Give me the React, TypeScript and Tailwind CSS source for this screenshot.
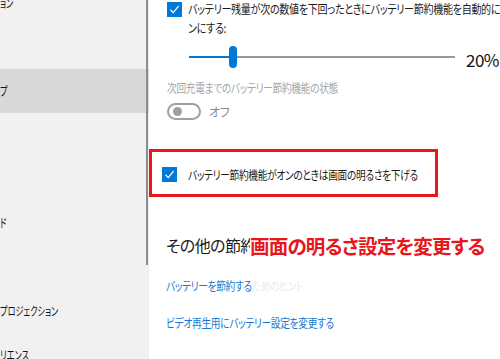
import React from 'react';

const jp = "font-['Noto_Sans_CJK_JP','Noto_Sans',sans-serif] [font-feature-settings:'palt']";
const narrow = 'origin-left scale-x-[0.81]';

const Check = ({ className = '' }: { className?: string }) => (
  <div className={`flex h-[15px] w-[15px] shrink-0 items-center justify-center bg-[#0078d7] ${className}`}>
    <svg width="11" height="11" viewBox="0 0 11 11" fill="none">
      <path d="M1.5 5.8 L4.2 8.6 L9.6 2.2" stroke="#fff" strokeWidth="1.3" />
    </svg>
  </div>
);

const navRows = ['ョン', '', 'プ', '', '', 'ド', '', 'プロジェクション', 'リエンス'];

const Sidebar = () => (
  <div className="relative h-full w-[149px] shrink-0 overflow-hidden bg-[#f1f1f2]">
    <div className="-mt-[19px] flex flex-col">
      {navRows.map((t, i) => (
        <div
          key={i}
          className={`flex h-[44px] items-center text-[12px] text-[#111] ${i === 2 ? 'bg-[#d9d9d9]' : ''}`}
        >
          <span className="origin-left scale-x-[0.68] whitespace-nowrap">{t}</span>
        </div>
      ))}
    </div>
    <div className="absolute left-[146px] top-0 h-[265px] w-[2px] bg-[#8c8c8c]" />
  </div>
);

export default function App() {
  return (
    <div className={`flex h-[359px] w-[500px] overflow-hidden bg-white ${jp}`}>
      <Sidebar />
      <div className="flex min-w-0 flex-1 flex-col">
        <div className="flex pl-[18px] pt-[2px]">
          <Check />
          <div className="ml-[6px] -mt-[3px] whitespace-nowrap text-[12px] leading-[19px] tracking-[-0.4px] text-[#1a1a1a] origin-left scale-x-[0.84]">
            <div>バッテリー残量が次の数値を下回ったときにバッテリー節約機能を自動的にオ</div>
            <div>ンにする:</div>
          </div>
        </div>

        <div className="ml-[40px] mt-[4px] flex items-center">
          <div className="relative flex h-[22px] w-[266px] items-center">
            <div className="h-[2px] w-[44px] bg-[#0078d7]" />
            <div className="h-[2px] flex-1 bg-[#999]" />
            <div className="absolute left-[40px] top-0 h-[22px] w-[8px] rounded-full bg-[#0078d7]" />
          </div>
          <div className="ml-[11px] whitespace-nowrap pt-[6px] text-[17px] tracking-[-0.5px] text-[#111]">20%</div>
        </div>

        <div className={`ml-[18px] mt-[6px] whitespace-nowrap text-[12px] tracking-[-0.4px] text-[#a6a6a6] ${narrow}`}>
          次回充電までのバッテリー節約機能の状態
        </div>

        <div className="ml-[18px] mt-[6px] flex items-center">
          <div className="flex h-[17px] w-[34px] items-center rounded-full border-2 border-[#a0a0a0] pl-[4px]">
            <div className="h-[9px] w-[9px] rounded-full bg-[#a0a0a0]" />
          </div>
          <div className="ml-[8px] text-[12px] tracking-[-0.5px] text-[#888]">オフ</div>
        </div>

        <div className="mt-[28px] flex h-[48px] w-[289px] items-center border-[3px] border-[#e8161d] pl-[10px] pt-[4px]">
          <Check />
          <div className={`ml-[11px] whitespace-nowrap text-[12px] tracking-[-0.4px] text-[#1a1a1a] ${narrow}`}>
            バッテリー節約機能がオンのときは画面の明るさを下げる
          </div>
        </div>

        <div className="ml-[17px] mt-[34px] flex items-center whitespace-nowrap">
          <div className="w-[84px] overflow-hidden text-[16px] tracking-[-0.6px] text-[#1a1a1a]">その他の節約オプション</div>
          <div className="text-[19.5px] font-bold tracking-[-0.8px] text-[#e8161d]">画面の明るさ設定を変更する</div>
        </div>

        <div className={`ml-[17px] mt-[17px] whitespace-nowrap text-[12px] tracking-[-0.4px] text-[#1479d1] ${narrow}`}>
          バッテリーを節約する<span className="text-[#e2edf8]">ためのヒント</span>
        </div>

        <div className={`ml-[17px] mt-[19px] whitespace-nowrap text-[12px] tracking-[-0.4px] text-[#1479d1] ${narrow}`}>
          ビデオ再生用にバッテリー設定を変更する
        </div>
      </div>
    </div>
  );
}
